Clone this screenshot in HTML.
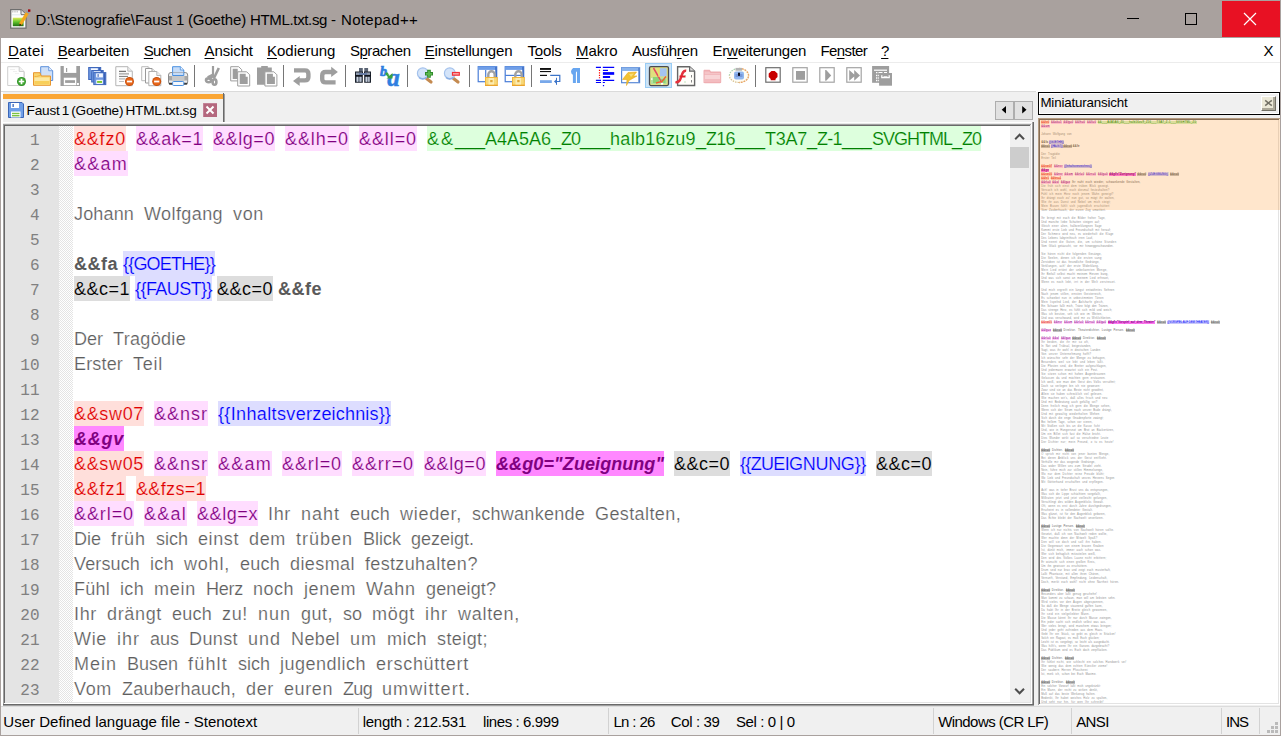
<!DOCTYPE html>
<html lang="de"><head><meta charset="utf-8"><title>Notepad++</title>
<style>
html,body{margin:0;padding:0}
body{width:1281px;height:736px;overflow:hidden;position:relative;background:#a9a19e;font-family:'Liberation Sans',sans-serif;color:#000}
div,span,svg,i,b{position:absolute;box-sizing:border-box}
.t{white-space:pre;line-height:1}
#menu .t,#status .t,#title .t{font-size:15px}
#ed .w{white-space:pre;font-size:18px;line-height:25px;height:25px;top:1px;-webkit-text-stroke:.2px #fff}
#ed .w.B,#ed .w.M,#ed .w .ns{-webkit-text-stroke-width:0}
#ed .w span{position:static}
#ed .w.K{-webkit-text-stroke-width:.1px}
#ed .w.R{-webkit-text-stroke-color:#ffdfdb} #ed .w.P{-webkit-text-stroke-color:#ffddff} #ed .w.G{-webkit-text-stroke-color:#ddffdd} #ed .w.U{-webkit-text-stroke-color:#ddddff} #ed .w.K{-webkit-text-stroke-color:#dddddd} #ed .w.M{-webkit-text-stroke-color:#ff88ff}
#ed .l{left:0;width:1005px;height:25px}
.D{color:#5e5e5e}
.R{color:#e00000} .P{color:#800080} .G{color:#008000} .U{color:#0000ff} .K{color:#000}
.B{color:#5a5a5a;font-weight:bold} .M{color:#800080;font-weight:bold;font-style:italic}
.bR{background:#ffdfdb} .bP{background:#ffddff} .bG{background:#ddffdd} .bU{background:#ddddff} .bK{background:#dddddd} .bM{background:#ff88ff}
.bg{top:0;height:25px}
#ln span{right:0;width:40px;text-align:right;font:16px/25px 'Liberation Mono',monospace;color:#808080;height:25px}
#mm .l{left:0;height:4px;white-space:pre;font-size:2.7px;line-height:6px;color:#8e8e8e}
#mm .l span{position:static}
#mm i{font-style:normal;top:0;height:4px}
#mm i.g{top:.5px;height:3px}
#mm .bR{background:#ffcfc8} #mm .bP{background:#ffcdf8} #mm .bG{background:#d2f5c4} #mm .bU{background:#c8c8fa} #mm .bK{background:#c2c2c2} #mm .bM{background:#ff78f0}
#mm i.M{font-style:italic}
#mm .K{color:#4a4a4a}
u{text-decoration:underline;text-decoration-thickness:1px;text-underline-offset:1.500px}
</style></head>
<body>
<div id="title" style="left:0;top:0;width:1281px;height:38px;background:#a9a19e">
<svg style="left:10px;top:9px;overflow:visible" width="22" height="20" viewBox="0 0 22 20"><defs><linearGradient id="gg" x1="0" y1="0" x2="0" y2="1"><stop offset="0" stop-color="#dcea58"/><stop offset=".5" stop-color="#62c42c"/><stop offset="1" stop-color="#1f6e12"/></linearGradient></defs><path d="M.700.700h10.300l5 5v13.400h-15.300z" fill="#fdfdfd" stroke="#6e6e6e" stroke-width="1.300"/><path d="M11 .700v5h5" fill="#e4e4e4" stroke="#6e6e6e" stroke-width="1"/><path d="M2.800 1.500v2M5 1.500v2M7.200 1.500v2" stroke="#c4c4c4" stroke-width="1.300"/><path d="M2 5.800h9" stroke="#dfe9ee" stroke-width="1"/><rect x="2.800" y="8.700" width="10.800" height="8.500" fill="url(#gg)"/><path d="M10.400 15.400l7.400-12.200" stroke="#f2a81c" stroke-width="3.200"/><path d="M9.300 17.200l.4-2.600l2.200 1.300z" fill="#4a2c10"/><path d="M17.300 4l.9-1.500" stroke="#8a98b0" stroke-width="3"/><rect x="18" y=".400" width="2.400" height="2.400" fill="#a80008"/></svg>
<span class="t" style="left:35.6px;top:12px;letter-spacing:-0.05px">D:\Stenografie\Faust</span>
<span class="t" style="left:176.0px;top:12px;letter-spacing:-0.18px">1</span>
<span class="t" style="left:188.0px;top:12px;letter-spacing:-0.13px">(Goethe)</span>
<span class="t" style="left:250.0px;top:12px;letter-spacing:-0.34px">HTML.txt.sg</span>
<span class="t" style="left:331.0px;top:12px;letter-spacing:1.16px">-</span>
<span class="t" style="left:341.0px;top:12px;letter-spacing:0.31px">Notepad++</span>
<div style="left:1127px;top:18px;width:12px;height:1px;background:#000"></div>
<div style="left:1185px;top:13px;width:12px;height:12px;border:1px solid #000"></div>
<div style="left:1222px;top:1px;width:58px;height:36px;background:#e81123"></div>
<svg style="left:1243px;top:12px" width="14" height="14" viewBox="0 0 14 14"><path d="M1 1l12 12M13 1l-12 12" stroke="#fff" stroke-width="1.200"/></svg>
</div>
<div id="menu" style="left:1px;top:38px;width:1279px;height:24px;background:#fff">
<span class="t" style="left:7.1px;top:5px;letter-spacing:0.15px"><u>D</u>atei</span>
<span class="t" style="left:56.7px;top:5px;letter-spacing:-0.09px"><u>B</u>earbeiten</span>
<span class="t" style="left:142.8px;top:5px;letter-spacing:-0.71px"><u>S</u>uchen</span>
<span class="t" style="left:203.5px;top:5px;letter-spacing:-0.11px"><u>A</u>nsicht</span>
<span class="t" style="left:266.0px;top:5px;letter-spacing:0.01px"><u>K</u>odierung</span>
<span class="t" style="left:348.9px;top:5px;letter-spacing:-0.45px">S<u>p</u>rachen</span>
<span class="t" style="left:423.7px;top:5px;letter-spacing:-0.19px"><u>E</u>instellungen</span>
<span class="t" style="left:526.4px;top:5px;letter-spacing:-0.15px">T<u>o</u>ols</span>
<span class="t" style="left:575.1px;top:5px;letter-spacing:-0.06px"><u>M</u>akro</span>
<span class="t" style="left:630.9px;top:5px;letter-spacing:-0.29px">Ausfüh<u>r</u>en</span>
<span class="t" style="left:711.5px;top:5px;letter-spacing:-0.24px">Er<u>w</u>eiterungen</span>
<span class="t" style="left:819.4px;top:5px;letter-spacing:-0.59px">Fe<u>n</u>ster</span>
<span class="t" style="left:880.1px;top:5px;letter-spacing:-1.04px"><u>?</u></span>
<span class="t" style="left:1262.5px;top:5px;letter-spacing:-0.42px">X</span>
</div>
<div style="left:1px;top:62px;width:1279px;height:1px;background:#ececec"></div>
<div id="tb" style="left:1px;top:63px;width:1279px;height:28px;background:#fff">
<svg style="left:5px;top:3px;overflow:visible" width="24" height="20" viewBox="0 0 24 20"><path d="M1.700.700h11.500l4.800 4.800v14h-16.300z" fill="#fefefe" stroke="#cfcfcf" stroke-width="1"/><path d="M13.200.700v4.800h4.800" fill="#f1f1f1" stroke="#cfcfcf" stroke-width="1"/><path d="M18.500 6v13.500" stroke="#d8d8d8" stroke-width="1"/><path d="M4 3.500h5M7 5.500h4M9 7.500h4" stroke="#efefef" stroke-width="1.200"/><circle cx="15.500" cy="15.500" r="4.500" fill="#2f9426"/><circle cx="15.500" cy="15.500" r="3.400" fill="#47ab38"/><path d="M12.800 15.500h5.400M15.500 12.800v5.400" stroke="#fff" stroke-width="1.700"/></svg>
<svg style="left:32px;top:3px;overflow:visible" width="24" height="20" viewBox="0 0 24 20"><path d="M7.700.700h8l4 4v9.800h-12z" fill="#cfe0f8" stroke="#5b8fdb" stroke-width="1"/><path d="M15.700.700v4h4" fill="#e8f0fc" stroke="#5b8fdb" stroke-width=".8"/><path d="M.500 6.700h6.500l1.200 3.300h9.300v9.300h-17z" fill="#f9d46c" stroke="#e8962e" stroke-width="1"/><path d="M1.500 11.500h15v7h-15z" fill="#fce9a4"/><path d="M1.500 15h15v3.500h-15z" fill="#f8cf5a"/><path d="M1.500 10.500c3 .5 4-1 6-1" stroke="#f0b040" stroke-width="1" fill="none"/></svg>
<svg style="left:59px;top:3px;overflow:visible" width="24" height="20" viewBox="0 0 24 20"><path d="M.500 0h19.500v20h-19.500z" fill="#9e9e9e"/><rect x="3.800" y="0" width="12.500" height="6.900" fill="#fff"/><rect x="6" y="2" width="1.200" height="4" fill="#9e9e9e"/><rect x="3.800" y="11.700" width="12.500" height="7.500" fill="#fff"/><rect x="5.100" y="14.200" width="9.900" height="2.700" fill="#9e9e9e"/><rect x="17" y="17" width="1.900" height="2" fill="#fff"/></svg>
<svg style="left:86px;top:3px;overflow:visible" width="24" height="20" viewBox="0 0 24 20"><rect x="1.7" y="1.5" width="12" height="12" fill="#6f98e0" stroke="#3f68bc" stroke-width="1"/><rect x="11.5" y="2.0" width="1.700" height="11" fill="#3a60b4"/><rect x="4.0" y="2.3" width="6.8" height="4.0" fill="#f4f8ff"/><rect x="4.7" y="4.5" width="11.5" height="11.5" fill="#6f98e0" stroke="#3f68bc" stroke-width="1"/><rect x="14.0" y="5.0" width="1.700" height="10.5" fill="#3a60b4"/><rect x="7.0" y="5.3" width="6.3" height="3.8" fill="#f4f8ff"/><rect x="6.8" y="6.6" width="12" height="12" fill="#6f98e0" stroke="#3f68bc" stroke-width="1"/><rect x="16.6" y="7.1" width="1.700" height="11" fill="#3a60b4"/><rect x="9.1" y="7.3999999999999995" width="6.8" height="4.0" fill="#f4f8ff"/><rect x="10.6" y="8.1" width="1" height="2.800" fill="#2f58b0"/><rect x="9.3" y="13.8" width="6.5" height="4.1" fill="#fff"/><rect x="10.1" y="14.9" width="4.9" height="2" fill="#7cc832"/></svg>
<svg style="left:113px;top:3px;overflow:visible" width="24" height="20" viewBox="0 0 24 20"><path d="M1.8 0.7h12.0l4.5 4.5v14.5h-16.5z" fill="#fefefe" stroke="#b4b4b4" stroke-width="1"/><path d="M13.8 0.7v4.5h4.5" fill="#eee" stroke="#b4b4b4" stroke-width=".9"/><path d="M5 5.300h7" stroke="#555" stroke-width="1"/><path d="M5 7.800h10" stroke="#b8b8b8" stroke-width="1.800"/><path d="M5 10.400h9" stroke="#777" stroke-width="1"/><path d="M5 12.800h6" stroke="#c8c8c8" stroke-width="1.800"/><path d="M5 15.500h5" stroke="#c0c0c0" stroke-width="1"/><circle cx="15.5" cy="15.5" r="4.5" fill="#c8500c"/><circle cx="15.5" cy="15.5" r="3.5" fill="#e8661a"/><rect x="12.9" y="14.6" width="5.200" height="1.800" fill="#fff"/></svg>
<svg style="left:140px;top:3px;overflow:visible" width="24" height="20" viewBox="0 0 24 20"><path d="M0.7 0.7h6.5l3 3v11h-9.5z" fill="#fefefe" stroke="#bcbcbc" stroke-width="1"/><path d="M7.199999999999999 0.7v3h3" fill="#eee" stroke="#bcbcbc" stroke-width=".9"/><path d="M4.5 2.5h6.5l3 3v11.5h-9.5z" fill="#fefefe" stroke="#9a9a9a" stroke-width="1"/><path d="M11.0 2.5v3h3" fill="#eee" stroke="#9a9a9a" stroke-width=".9"/><path d="M7.8 5.5h8l4 4v10.2h-12z" fill="#fefefe" stroke="#b0b0b0" stroke-width="1"/><path d="M15.8 5.5v4h4" fill="#eee" stroke="#b0b0b0" stroke-width=".9"/><circle cx="15.7" cy="15.5" r="4.5" fill="#c8500c"/><circle cx="15.7" cy="15.5" r="3.5" fill="#e8661a"/><rect x="13.1" y="14.6" width="5.200" height="1.800" fill="#fff"/></svg>
<svg style="left:167px;top:3px;overflow:visible" width="24" height="20" viewBox="0 0 24 20"><path d="M4.600.700h7.700l3.500 3.300v5.500h-11.200z" fill="#c6dcf8" stroke="#4a90e0" stroke-width="1"/><path d="M12.300.700v3.300h3.500" fill="#eef4fd" stroke="#4a90e0" stroke-width=".8"/><rect x=".500" y="6.500" width="19.200" height="12" rx="2.500" fill="#ececec" stroke="#8c8c8c" stroke-width="1"/><path d="M4.600 6.500v3h11.200v-3" fill="#c6dcf8" stroke="#4a90e0" stroke-width="1"/><rect x="1" y="10" width="18.200" height="4.500" fill="#a8a8a8"/><rect x="4" y="10" width="12.500" height="4.500" fill="#c8c8c8"/><rect x="1" y="16.800" width="18.200" height="1.700" fill="#3c3c3c"/><rect x="4.600" y="15.500" width="11.200" height="4" rx="1" fill="#f4f8fe" stroke="#4a90e0" stroke-width="1"/></svg>
<div style="left:193px;top:2px;width:1px;height:22px;background:#767676"></div>
<svg style="left:200px;top:3px;overflow:visible" width="24" height="20" viewBox="0 0 24 20"><path d="M12 0v11.500" stroke="#9e9e9e" stroke-width="2.200"/><path d="M17.800 2l-5 10.500" stroke="#9e9e9e" stroke-width="2.600"/><path d="M13 9l-6 3" stroke="#9e9e9e" stroke-width="4"/><ellipse cx="7.600" cy="14.300" rx="2.600" ry="1.900" fill="none" stroke="#9e9e9e" stroke-width="2.600"/><ellipse cx="13.500" cy="16" rx="1.900" ry="2.800" fill="none" stroke="#9e9e9e" stroke-width="2.600"/></svg>
<svg style="left:227px;top:3px;overflow:visible" width="24" height="20" viewBox="0 0 24 20"><path d="M2.7 0.7h8l3 3v11.2h-11z" fill="#fff" stroke="#9e9e9e" stroke-width="1"/><path d="M4.7 2.7h5v3h2v7.199999999999999h-7z" fill="#9e9e9e"/><path d="M9.7 5.8h9l3 3v11.2h-12z" fill="#fff" stroke="#9e9e9e" stroke-width="1"/><path d="M11.7 7.8h6v3h2v7.199999999999999h-8z" fill="#9e9e9e"/></svg>
<svg style="left:254px;top:3px;overflow:visible" width="24" height="20" viewBox="0 0 24 20"><path d="M2 1.400h4.200v-1.400h6.600v1.400h4v17.300h-14.800z" fill="#9e9e9e"/><path d="M9.9 5.8h9l3 3v11.2h-12z" fill="#fff" stroke="#9e9e9e" stroke-width="1"/><path d="M11.9 7.8h6v3h2v7.199999999999999h-8z" fill="#9e9e9e"/></svg>
<div style="left:282px;top:2px;width:1px;height:22px;background:#767676"></div>
<svg style="left:289px;top:3px;overflow:visible" width="24" height="20" viewBox="0 0 24 20"><path d="M4 4.400h10.800q3.600 0 3.600 3.500v3q0 3.500-3.600 3.500h-5.800" fill="none" stroke="#9e9e9e" stroke-width="4.400"/><path d="M3 14.900l6.700-5v10z" fill="#9e9e9e"/></svg>
<svg style="left:316px;top:3px;overflow:visible" width="24" height="20" viewBox="0 0 24 20"><path d="M15 6h-6.300q-3.500 0-3.500 3.500v3.400q0 3.500 3.500 3.500h9.900" fill="none" stroke="#9e9e9e" stroke-width="4.400"/><path d="M20.900 5.900l-6.700-5.100v10.200z" fill="#9e9e9e"/></svg>
<div style="left:344px;top:2px;width:1px;height:22px;background:#767676"></div>
<svg style="left:351px;top:3px;overflow:visible" width="24" height="20" viewBox="0 0 24 20"><path d="M7 2.100h3.800v4h-3.800zM12.300 2.100h3.800v4h-3.800z" fill="#5a6474"/><path d="M3 5.500h8v11.300h-8zM12 5.500h7v11.300h-7z" fill="#1c222c"/><path d="M4 6.500h6v2.500h-6zM13 6.500h5v2.500h-5z" fill="#8e9aae"/><rect x="7" y="7" width="8" height="2" fill="#6a7fa8"/><path d="M4 10.800h6v5h-6zM13 10.800h5v5h-5z" fill="#7a8494"/><path d="M5.500 10.800v5M8.300 10.800v5M14.500 10.800v5M16.800 10.800v5" stroke="#c8d0dc" stroke-width="1"/><path d="M3 9.600h16" stroke="#10141c" stroke-width="1.300"/><rect x="10.800" y="9" width="1.400" height="8" fill="#fff"/></svg>
<svg style="left:378px;top:3px;overflow:visible" width="24" height="20" viewBox="0 0 24 20"><text x="1" y="9.800" font-family="Liberation Serif,serif" font-weight="bold" font-style="italic" font-size="14" fill="#2f7fe0" stroke="#2f7fe0" stroke-width=".7">b</text><text x="8.300" y="19.600" font-family="Liberation Serif,serif" font-weight="bold" font-style="italic" font-size="25" fill="#2f7fe0" stroke="#2f7fe0" stroke-width=".5">a</text><path d="M7 6.800l3.500 4.200" stroke="#3aa040" stroke-width="2.600"/><path d="M7.500 12.500h6v-5.500z" fill="#3aa040"/><path d="M9.300 8.500l1.500 1.500" stroke="#a8e0a0" stroke-width="1"/></svg>
<div style="left:406px;top:2px;width:1px;height:22px;background:#767676"></div>
<svg style="left:413px;top:3px;overflow:visible" width="24" height="20" viewBox="0 0 24 20"><path d="M12.500 12.500l4.500 3.500" stroke="#c48a50" stroke-width="3.200" stroke-linecap="round"/><circle cx="8.800" cy="7.200" r="5.400" fill="#d4e4f9" stroke="#a4c2ec" stroke-width="1.200"/><path d="M5 11.500c2 2 5.500 2 7.500 0" stroke="#88aee4" stroke-width="1.400" fill="none"/><path d="M11 7.800h8M15 3.800v8" stroke="#2f8a2a" stroke-width="3.600"/><path d="M12 7.800h6M15 4.800v6" stroke="#5cb850" stroke-width="1.800"/></svg>
<svg style="left:440px;top:3px;overflow:visible" width="24" height="20" viewBox="0 0 24 20"><path d="M12.500 12.500l4.500 3.500" stroke="#c48a50" stroke-width="3.200" stroke-linecap="round"/><circle cx="8.800" cy="7.200" r="5.400" fill="#d4e4f9" stroke="#a4c2ec" stroke-width="1.200"/><path d="M5 11.500c2 2 5.500 2 7.500 0" stroke="#88aee4" stroke-width="1.400" fill="none"/><rect x="10.900" y="5.900" width="8" height="3.900" fill="#f03038"/><rect x="12" y="7" width="5.800" height="1.600" fill="#f8a0a0"/></svg>
<div style="left:468px;top:2px;width:1px;height:22px;background:#767676"></div>
<svg style="left:475px;top:3px;overflow:visible" width="24" height="20" viewBox="0 0 24 20"><rect x="2.2" y=".700" width="18.500" height="15" fill="#fff" stroke="#4a7ed8" stroke-width="1.200"/><rect x="2.2" y=".700" width="18.500" height="3.200" fill="#6f9ee8"/><path d="M20.0 1v14.500" stroke="#3a68c0" stroke-width="1.400"/><path d="M9.700 4v11.700" stroke="#4a7ed8" stroke-width="1.200"/><path d="M12.3 11.5v-3a3.200 3.200 0 0 1 6.400 0v3" fill="none" stroke="#a2a2a2" stroke-width="2.400"/><rect x="9" y="11" width="12.800" height="8.800" fill="#f1b73c"/><rect x="10" y="12" width="10.800" height="6.800" fill="#f8d878"/><rect x="12.5" y="12" width="5.500" height="6.800" fill="#fcecb0"/><rect x="14.2" y="14" width="2.400" height="2.200" fill="#e0a83a"/><path d="M9 19.3h12.800" stroke="#e89a20" stroke-width="1"/></svg>
<svg style="left:502px;top:3px;overflow:visible" width="24" height="20" viewBox="0 0 24 20"><rect x="2.2" y=".700" width="18.500" height="15" fill="#fff" stroke="#4a7ed8" stroke-width="1.200"/><rect x="2.2" y=".700" width="18.500" height="3.200" fill="#6f9ee8"/><path d="M20.0 1v14.500" stroke="#3a68c0" stroke-width="1.400"/><path d="M2.200 9.400h18" stroke="#4a7ed8" stroke-width="1.200"/><path d="M12.3 11.5v-3a3.200 3.200 0 0 1 6.400 0v3" fill="none" stroke="#a2a2a2" stroke-width="2.400"/><rect x="9" y="11" width="12.800" height="8.800" fill="#f1b73c"/><rect x="10" y="12" width="10.800" height="6.800" fill="#f8d878"/><rect x="12.5" y="12" width="5.500" height="6.800" fill="#fcecb0"/><rect x="14.2" y="14" width="2.400" height="2.200" fill="#e0a83a"/><path d="M9 19.3h12.800" stroke="#e89a20" stroke-width="1"/></svg>
<div style="left:530px;top:2px;width:1px;height:22px;background:#767676"></div>
<svg style="left:537px;top:3px;overflow:visible" width="24" height="20" viewBox="0 0 24 20"><rect x="2" y="2" width="11" height="1.900" fill="#111"/><rect x="2" y="5" width="11" height="1.100" fill="#111"/><rect x="2" y="8.800" width="7" height="1.200" fill="#111"/><path d="M12.200 9.400h9.600v6.100h-5" stroke="#3c74c8" stroke-width="1.200" fill="none"/><path d="M18.500 11.800v7" stroke="#3c74c8" stroke-width="1"/><path d="M19 12.800l-3 2.700l3 2.700z" fill="#3c74c8"/><rect x="2" y="14.200" width="11.800" height="2.800" fill="#78a8ea"/></svg>
<svg style="left:564px;top:3px;overflow:visible" width="24" height="20" viewBox="0 0 24 20"><path d="M9.400 2v15M13.500 2v15" stroke="#68a6f0" stroke-width="3"/><path d="M15 1.900h-5a4 4 0 0 0-4 3.800a3.500 3.500 0 0 0 2.500 3.300z" fill="#68a6f0"/></svg>
<svg style="left:591px;top:3px;overflow:visible" width="24" height="20" viewBox="0 0 24 20"><path d="M3.900 1.400h5.100M10.800 1.400h11.400M3.900 14.400h5.100M10.800 14.400h11.400M3.900 16.500h5.100M10.800 16.500h2.100" stroke="#0000ff" stroke-width="1.200"/><path d="M10.900 4.400h5.100" stroke="#0000ff" stroke-width="1.200"/><rect x="10.900" y="6.100" width="11.300" height="2.700" fill="#0000ff"/><rect x="10.900" y="10" width="7.200" height="2" fill="#0000ff"/><rect x="10.900" y="19" width="1.200" height="1.200" fill="#0000ff"/><path d="M7.500 3.700v8.500" stroke="#f00" stroke-width="1.200" stroke-dasharray="1.200 1.300"/></svg>
<svg style="left:618px;top:3px;overflow:visible" width="24" height="20" viewBox="0 0 24 20"><rect x="2.600" y="1.700" width="18" height="15" fill="#fff" stroke="#5a8ad8" stroke-width="1.200"/><rect x="2.600" y="1.700" width="18" height="3.300" fill="#8ab4ec"/><path d="M20 2v14" stroke="#4a78c8" stroke-width="1.300"/><path d="M9 6.500l8.500-.5l-3 4h3.500l-8 4.500l-2.500 5l.5-6h-4.500z" fill="#f2c232" stroke="#e8aa20" stroke-width=".6"/><path d="M10 8l5-.5l-3 3.500" fill="#f8dc78"/></svg>
<div style="left:644px;top:0;width:27px;height:25px;background:#cce4f7;border:1px solid #99ccf5"></div>
<svg style="left:645px;top:3px;overflow:visible" width="24" height="20" viewBox="0 0 24 20"><rect x="3.500" y=".600" width="19" height="19" rx="1.500" fill="#e0e07e" stroke="#4a4a50" stroke-width="1.300"/><rect x="13.500" y="2.200" width="7.200" height="8.200" fill="#a4c4f0"/><rect x="4.800" y="11.500" width="15.800" height="6.500" fill="#b4e0a0"/><rect x="7" y="11" width="6" height="6" fill="#8cd478"/><rect x="15" y="13" width="4.500" height="4" fill="#8cd478"/><path d="M7.500 2l5.500 9.500l3 6" stroke="#e84860" stroke-width="1.500" fill="none"/><path d="M20 10.500l-4 5l-6 1.500" stroke="#f06030" stroke-width="1.400" fill="none"/><path d="M13 2v9" stroke="#f0e060" stroke-width="1.200"/><rect x="15" y="16.800" width="2.200" height="1.800" fill="#fff"/><rect x="5" y="12.300" width="1.500" height="1.500" fill="#fff"/></svg>
<svg style="left:672px;top:3px;overflow:visible" width="24" height="20" viewBox="0 0 24 20"><path d="M4.600.700h12l5 4.500v14.300h-17z" fill="#fffefa" stroke="#666" stroke-width="1.400"/><path d="M16.600.700v4.500h5" fill="#ddd" stroke="#666" stroke-width="1.200"/><path d="M13.200 4.800c-3.500-.5-4 3-5.500 7.500c-1 3-2.500 4.300-5.300 3.800" stroke="#e4303c" stroke-width="2.400" fill="none"/><path d="M6.500 10.500h6" stroke="#e0202c" stroke-width="2"/><path d="M18.500 9v2.500M18.500 14v2.500" stroke="#888" stroke-width="1"/><path d="M11.500 9.500h1M11.500 16h1" stroke="#8c8" stroke-width="1"/></svg>
<svg style="left:699px;top:3px;overflow:visible" width="24" height="20" viewBox="0 0 24 20"><path d="M3.500 5c0-.8.400-1.200 1.200-1.200h5l1.300 1.600h9c.8 0 1.200.4 1.200 1.200v9.500c0 .8-.4 1.200-1.200 1.200h-15.300c-.8 0-1.200-.4-1.200-1.200z" fill="#efaeb2"/><path d="M4.600 9h15.500v7h-15.500z" fill="#f8d4d6"/><path d="M4.600 5.500h4.500l1.500 1.500h9.500v1.500h-15.500z" fill="#f5c4c7"/><path d="M4.600 13h15.500v3h-15.500z" fill="#f3bcc0"/></svg>
<svg style="left:726px;top:3px;overflow:visible" width="24" height="20" viewBox="0 0 24 20"><ellipse cx="12" cy="9.500" rx="9.600" ry="7" fill="#fffdf4"/><path d="M2.400 9.500a9.600 7 0 0 1 9.600-7" stroke="#a8d4b0" stroke-width="1.200" fill="none" stroke-dasharray="1.500 1"/><path d="M12 2.500a9.600 7 0 0 1 0 14" stroke="#e8a868" stroke-width="1.400" fill="none" stroke-dasharray="2 .8"/><path d="M12 16.500a9.600 7 0 0 1-9.600-7" stroke="#d8c090" stroke-width="1.200" fill="none" stroke-dasharray="1.500 1"/><rect x="8.500" y="1.900" width="6.500" height="2.800" fill="#b4b4b4"/><rect x="7" y="5.600" width="10" height="8" rx="2" fill="#92b8f0"/><rect x="8.500" y="8" width="7" height="3" fill="#7898d8"/><rect x="11" y="6.700" width="2" height="3.200" fill="#0c1020"/></svg>
<div style="left:754px;top:2px;width:1px;height:22px;background:#767676"></div>
<svg style="left:761px;top:3px;overflow:visible" width="24" height="20" viewBox="0 0 24 20"><rect x="3.800" y="1.700" width="14.400" height="14.500" fill="#fff" stroke="#6e6e6e" stroke-width="1.200"/><path d="M9.500 5h3.200l2.800 2.500v3.500l-2 2v1.300h-4.800v-1.300l-2-2v-3.500z" fill="#c80000"/></svg>
<svg style="left:788px;top:3px;overflow:visible" width="24" height="20" viewBox="0 0 24 20"><rect x="3.800" y="1.700" width="14.400" height="14.500" fill="#fff" stroke="#a4a4a4" stroke-width="1.200"/><rect x="7" y="5" width="9" height="8.800" fill="#9e9e9e"/></svg>
<svg style="left:815px;top:3px;overflow:visible" width="24" height="20" viewBox="0 0 24 20"><rect x="3.800" y="1.700" width="14.400" height="14.500" fill="#fff" stroke="#a4a4a4" stroke-width="1.200"/><path d="M9.200 4v10.800h1l5-5.400l-5-5.400z" fill="#9e9e9e"/></svg>
<svg style="left:842px;top:3px;overflow:visible" width="24" height="20" viewBox="0 0 24 20"><rect x="3.800" y="1.700" width="14.400" height="14.500" fill="#fff" stroke="#a4a4a4" stroke-width="1.200"/><path d="M6.200 4v10.800l5-4.400v4.400l5.800-5.400l-5.800-5.400v4.400z" fill="#9e9e9e"/></svg>
<svg style="left:869px;top:3px;overflow:visible" width="24" height="20" viewBox="0 0 24 20"><rect x="2.100" y="0" width="17" height="16.800" fill="#9e9e9e"/><path d="M4 4.200h13" stroke="#fff" stroke-width="1.200"/><path d="M6 6.700h1.400M8.500 6.700h4M14 6.700h3M6 9.500h1.400M8.200 9.500h1.400M6 12h1.400M8.200 12h1.400M6 14.500h1.400M8.200 14.500h1.400" stroke="#fff" stroke-width="1.300"/><rect x="9.100" y="7" width="12.900" height="12.700" fill="#9e9e9e"/><path d="M11.800 9.300v2.400h7.400v-2.400" stroke="#fff" stroke-width="1.300" fill="none"/><rect x="13.500" y="10.300" width="4" height="1.400" fill="#fff"/></svg>
</div>
<div id="left" style="left:1px;top:91px;width:1035px;height:615px;background:#f0f0f0">
<div style="left:0px;top:0px;width:1035px;height:1px;background:#dadada;"></div>
<div style="left:0px;top:1px;width:2px;height:614px;background:#fff;"></div>
<div style="left:2px;top:3px;width:221px;height:5px;background:#faa635;"></div>
<div style="left:222px;top:2px;width:1px;height:30px;background:#696969;"></div>
<div style="left:223px;top:3px;width:1px;height:29px;background:#a0a0a0;"></div>
<svg style="left:7px;top:11px" width="16" height="16" viewBox="0 0 16 16"><path d="M.5.5h13.500l1.500 1.500v13.500h-15z" fill="#6f9fe8" stroke="#3a66b8"/><rect x="3" y="1" width="8" height="5" fill="#fff"/><rect x="4.500" y="2" width="1.300" height="3" fill="#3a66b8"/><rect x="3" y="9.500" width="9.500" height="6" fill="#fff"/><rect x="4" y="10.800" width="7.500" height="1.400" fill="#7cc243"/><rect x="4" y="13" width="7.500" height="1.400" fill="#7cc243"/></svg>
<span class="t" style="left:25.6px;top:13px;font-size:13.600px;word-spacing:-1.500px;letter-spacing:-0.19px">Faust 1 (Goethe) HTML.txt.sg</span>
<svg style="left:202px;top:12px" width="14" height="14" viewBox="0 0 14 14"><rect width="14" height="14" fill="#b4687e"/><path d="M0 14v-14h14" fill="none" stroke="#c68ba0" stroke-width="1.500"/><path d="M3.500 3.500l7 7M10.500 3.500l-7 7" stroke="#fff" stroke-width="2"/></svg>
<div style="left:994px;top:10px;width:19px;height:19px;background:#e1e1e1;border:1px solid #adadad"></div>
<div style="left:1013px;top:10px;width:19px;height:19px;background:#e1e1e1;border:1px solid #adadad"></div>
<svg style="left:994px;top:10px" width="38" height="19" viewBox="0 0 38 19"><path d="M11 5v7.500l-4.300-3.750z" fill="#000"/><path d="M27.200 5v7.500l4.300-3.750z" fill="#000"/></svg>
<div style="left:2px;top:31px;width:1030px;height:1px;background:#fff;"></div>
<div style="left:2px;top:32px;width:1030px;height:1px;background:#e8e8e8;"></div>
<div style="left:2px;top:33px;width:1029px;height:1px;background:#a0a0a0;"></div>
<div style="left:3px;top:34px;width:1027px;height:1px;background:#696969;"></div>
<div style="left:2px;top:33px;width:1px;height:581px;background:#a0a0a0;"></div>
<div style="left:3px;top:34px;width:1px;height:579px;background:#696969;"></div>
<div style="left:1030px;top:33px;width:1px;height:580px;background:#fff;"></div>
<div style="left:1029px;top:34px;width:1px;height:578px;background:#e3e3e3;"></div>
<div style="left:1031px;top:31px;width:1px;height:584px;background:#a0a0a0;"></div>
<div style="left:1032px;top:31px;width:1px;height:584px;background:#696969;"></div>
<div style="left:3px;top:612px;width:1028px;height:1px;background:#fff;"></div>
<div style="left:4px;top:611px;width:1026px;height:1px;background:#e3e3e3;"></div>
<div style="left:2px;top:613px;width:1031px;height:1px;background:#696969;"></div>
<div style="left:2px;top:614px;width:1031px;height:1px;background:#a0a0a0;"></div>
<div id="ed" style="left:4px;top:35px;width:1005px;height:576px;background:#fff;overflow:hidden">
<div id="ln" style="left:0;top:0;width:54px;height:576px;background:#e4e4e4">
<span style="top:0px;right:19.5px;margin-top:3px">1</span>
<span style="top:25px;right:19.5px;margin-top:3px">2</span>
<span style="top:50px;right:19.5px;margin-top:3px">3</span>
<span style="top:75px;right:19.5px;margin-top:3px">4</span>
<span style="top:100px;right:19.5px;margin-top:3px">5</span>
<span style="top:125px;right:19.5px;margin-top:3px">6</span>
<span style="top:150px;right:19.5px;margin-top:3px">7</span>
<span style="top:175px;right:19.5px;margin-top:3px">8</span>
<span style="top:200px;right:19.5px;margin-top:3px">9</span>
<span style="top:225px;right:19.5px;margin-top:3px">10</span>
<span style="top:250px;right:19.5px;margin-top:3px">11</span>
<span style="top:275px;right:19.5px;margin-top:3px">12</span>
<span style="top:300px;right:19.5px;margin-top:3px">13</span>
<span style="top:325px;right:19.5px;margin-top:3px">14</span>
<span style="top:350px;right:19.5px;margin-top:3px">15</span>
<span style="top:375px;right:19.5px;margin-top:3px">16</span>
<span style="top:400px;right:19.5px;margin-top:3px">17</span>
<span style="top:425px;right:19.5px;margin-top:3px">18</span>
<span style="top:450px;right:19.5px;margin-top:3px">19</span>
<span style="top:475px;right:19.5px;margin-top:3px">20</span>
<span style="top:500px;right:19.5px;margin-top:3px">21</span>
<span style="top:525px;right:19.5px;margin-top:3px">22</span>
<span style="top:550px;right:19.5px;margin-top:3px">23</span>
</div>
<div style="left:54px;top:0;width:14px;height:576px;background:#f2f2f2;background-image:conic-gradient(#e4e4e4 25%,#fff 0 50%,#e4e4e4 0 75%,#fff 0);background-size:2px 2px"></div>
<div class="l" style="top:0px">
<i class="bg bR" style="left:69px;width:52px"></i>
<i class="bg bP" style="left:131px;width:67px"></i>
<i class="bg bP" style="left:208px;width:62px"></i>
<i class="bg bP" style="left:280px;width:64px"></i>
<i class="bg bP" style="left:354px;width:58px"></i>
<i class="bg bG" style="left:422px;width:554px"></i>
<span class="w R" style="left:69px"><span style="letter-spacing:0.79px">&amp;&amp;fz0</span></span>
<span class="w P" style="left:131px"><span style="letter-spacing:0.58px">&amp;&amp;ak=1</span></span>
<span class="w P" style="left:208px"><span style="letter-spacing:0.58px">&amp;&amp;lg=0</span></span>
<span class="w P" style="left:280px"><span style="letter-spacing:0.91px">&amp;&amp;lh=0</span></span>
<span class="w P" style="left:354px"><span style="letter-spacing:0.91px">&amp;&amp;ll=0</span></span>
<span class="w G" style="left:422px"><span style="letter-spacing:1.99px">&amp;&amp;</span><span class="ns" style="letter-spacing:-0.02px">___</span><span style="letter-spacing:-0.01px">A4A5A6</span><span class="ns" style="letter-spacing:-0.02px">_</span><span style="letter-spacing:-1.01px">Z0</span><span class="ns" style="letter-spacing:-0.02px">___</span><span style="letter-spacing:0.32px">halb16zu9</span><span class="ns" style="letter-spacing:-0.02px">_</span><span style="letter-spacing:-0.68px">Z16</span><span class="ns" style="letter-spacing:-0.02px">___</span><span style="letter-spacing:-0.26px">T3A7</span><span class="ns" style="letter-spacing:-0.02px">_</span><span style="letter-spacing:-0.67px">Z-1</span><span class="ns" style="letter-spacing:-0.02px">___</span><span style="letter-spacing:-1.00px">SVGHTML</span><span class="ns" style="letter-spacing:-0.02px">_</span><span style="letter-spacing:-1.01px">Z0</span></span>
</div>
<div class="l" style="top:25px">
<i class="bg bP" style="left:69px;width:54px"></i>
<span class="w P" style="left:69px"><span style="letter-spacing:1.24px">&amp;&amp;am</span></span>
</div>
<div class="l" style="top:75px">
<span class="w D" style="left:69px"><span style="letter-spacing:0.16px">Johann</span></span>
<span class="w D" style="left:139px"><span style="letter-spacing:0.41px">Wolfgang</span></span>
<span class="w D" style="left:228px"><span style="letter-spacing:0.66px">von</span></span>
</div>
<div class="l" style="top:125px">
<i class="bg bU" style="left:118px;width:92px"></i>
<span class="w B" style="left:69px"><span style="letter-spacing:0.50px">&amp;&amp;fa</span></span>
<span class="w U" style="left:118px"><span style="letter-spacing:-0.81px">{{GOETHE}}</span></span>
</div>
<div class="l" style="top:150px">
<i class="bg bK" style="left:69px;width:56px"></i>
<i class="bg bU" style="left:130px;width:77px"></i>
<i class="bg bK" style="left:212px;width:56px"></i>
<span class="w K" style="left:69px"><span style="letter-spacing:0.49px">&amp;&amp;c=1</span></span>
<span class="w U" style="left:130px"><span style="letter-spacing:-0.56px">{{FAUST}}</span></span>
<span class="w K" style="left:212px"><span style="letter-spacing:0.49px">&amp;&amp;c=0</span></span>
<span class="w B" style="left:273px"><span style="letter-spacing:0.50px">&amp;&amp;fe</span></span>
</div>
<div class="l" style="top:200px">
<span class="w D" style="left:69px"><span style="letter-spacing:-0.01px">Der</span></span>
<span class="w D" style="left:108px"><span style="letter-spacing:0.33px">Tragödie</span></span>
</div>
<div class="l" style="top:225px">
<span class="w D" style="left:69px"><span style="letter-spacing:0.16px">Erster</span></span>
<span class="w D" style="left:128px"><span style="letter-spacing:0.75px">Teil</span></span>
</div>
<div class="l" style="top:275px">
<i class="bg bR" style="left:69px;width:70px"></i>
<i class="bg bP" style="left:149px;width:54px"></i>
<i class="bg bU" style="left:213px;width:173px"></i>
<span class="w R" style="left:69px"><span style="letter-spacing:0.66px">&amp;&amp;sw07</span></span>
<span class="w P" style="left:149px"><span style="letter-spacing:0.99px">&amp;&amp;nsr</span></span>
<span class="w U" style="left:213px"><span style="letter-spacing:0.36px">{{Inhaltsve</span><span style="letter-spacing:0.18px">rzeichnis}}</span></span>
</div>
<div class="l" style="top:300px">
<i class="bg bM" style="left:69px;width:50px"></i>
<span class="w M" style="left:69px"><span style="letter-spacing:0.75px">&amp;&amp;gv</span></span>
</div>
<div class="l" style="top:325px">
<i class="bg bR" style="left:69px;width:70px"></i>
<i class="bg bP" style="left:149px;width:54px"></i>
<i class="bg bP" style="left:213px;width:54px"></i>
<i class="bg bP" style="left:277px;width:60px"></i>
<i class="bg bP" style="left:347px;width:62px"></i>
<i class="bg bP" style="left:419px;width:62px"></i>
<i class="bg bM" style="left:491px;width:168px"></i>
<i class="bg bK" style="left:669px;width:56px"></i>
<i class="bg bU" style="left:735px;width:126px"></i>
<i class="bg bK" style="left:871px;width:56px"></i>
<span class="w R" style="left:69px"><span style="letter-spacing:0.66px">&amp;&amp;sw05</span></span>
<span class="w P" style="left:149px"><span style="letter-spacing:0.99px">&amp;&amp;nsr</span></span>
<span class="w P" style="left:213px"><span style="letter-spacing:1.24px">&amp;&amp;am</span></span>
<span class="w P" style="left:277px"><span style="letter-spacing:0.91px">&amp;&amp;rl=0</span></span>
<span class="w P" style="left:347px"><span style="letter-spacing:0.91px">&amp;&amp;rr=0</span></span>
<span class="w P" style="left:419px"><span style="letter-spacing:0.58px">&amp;&amp;lg=0</span></span>
<span class="w M" style="left:491px"><span style="letter-spacing:0.12px">&amp;&amp;g0=&quot;Zu</span><span style="letter-spacing:0.06px">eignung&quot;</span></span>
<span class="w K" style="left:669px"><span style="letter-spacing:0.49px">&amp;&amp;c=0</span></span>
<span class="w U" style="left:735px"><span style="letter-spacing:-0.67px">{{ZUEI</span><span style="letter-spacing:-0.29px">GNUNG}}</span></span>
<span class="w K" style="left:871px"><span style="letter-spacing:0.49px">&amp;&amp;c=0</span></span>
</div>
<div class="l" style="top:350px">
<i class="bg bR" style="left:69px;width:52px"></i>
<i class="bg bR" style="left:131px;width:70px"></i>
<span class="w R" style="left:69px"><span style="letter-spacing:0.79px">&amp;&amp;fz1</span></span>
<span class="w R" style="left:131px"><span style="letter-spacing:0.35px">&amp;&amp;fzs=1</span></span>
</div>
<div class="l" style="top:375px">
<i class="bg bP" style="left:69px;width:60px"></i>
<i class="bg bP" style="left:139px;width:43px"></i>
<i class="bg bP" style="left:192px;width:61px"></i>
<span class="w P" style="left:69px"><span style="letter-spacing:0.91px">&amp;&amp;rl=0</span></span>
<span class="w P" style="left:139px"><span style="letter-spacing:1.24px">&amp;&amp;al</span></span>
<span class="w P" style="left:192px"><span style="letter-spacing:0.58px">&amp;&amp;lg=x</span></span>
<span class="w D" style="left:263px"><span style="letter-spacing:0.66px">Ihr</span></span>
<span class="w D" style="left:296px"><span style="letter-spacing:0.99px">naht</span></span>
<span class="w D" style="left:345px"><span style="letter-spacing:0.24px">euch</span></span>
<span class="w D" style="left:395px"><span style="letter-spacing:0.71px">wieder,</span></span>
<span class="w D" style="left:467px"><span style="letter-spacing:0.27px">schwankende</span></span>
<span class="w D" style="left:590px"><span style="letter-spacing:0.40px">Gestalten,</span></span>
</div>
<div class="l" style="top:400px">
<span class="w D" style="left:69px"><span style="letter-spacing:-0.01px">Die</span></span>
<span class="w D" style="left:106px"><span style="letter-spacing:0.99px">früh</span></span>
<span class="w D" style="left:151px"><span style="letter-spacing:-0.00px">sich</span></span>
<span class="w D" style="left:193px"><span style="letter-spacing:0.59px">einst</span></span>
<span class="w D" style="left:244px"><span style="letter-spacing:0.66px">dem</span></span>
<span class="w D" style="left:291px"><span style="letter-spacing:0.99px">trüben</span></span>
<span class="w D" style="left:358px"><span style="letter-spacing:-0.00px">Blick</span></span>
<span class="w D" style="left:406px"><span style="letter-spacing:-0.01px">gezeigt.</span></span>
</div>
<div class="l" style="top:425px">
<span class="w D" style="left:69px"><span style="letter-spacing:0.14px">Versuch</span></span>
<span class="w D" style="left:145px"><span style="letter-spacing:0.33px">ich</span></span>
<span class="w D" style="left:179px"><span style="letter-spacing:0.79px">wohl,</span></span>
<span class="w D" style="left:235px"><span style="letter-spacing:0.24px">euch</span></span>
<span class="w D" style="left:285px"><span style="letter-spacing:0.42px">diesmal</span></span>
<span class="w D" style="left:360px"><span style="letter-spacing:0.33px">festzu</span><span style="letter-spacing:0.56px">halten?</span></span>
</div>
<div class="l" style="top:450px">
<span class="w D" style="left:69px"><span style="letter-spacing:0.25px">Fühl</span></span>
<span class="w D" style="left:115px"><span style="letter-spacing:0.33px">ich</span></span>
<span class="w D" style="left:149px"><span style="letter-spacing:0.75px">mein</span></span>
<span class="w D" style="left:201px"><span style="letter-spacing:-0.25px">Herz</span></span>
<span class="w D" style="left:248px"><span style="letter-spacing:0.49px">noch</span></span>
<span class="w D" style="left:299px"><span style="letter-spacing:0.59px">jenem</span></span>
<span class="w D" style="left:361px"><span style="letter-spacing:0.91px">Wahn</span></span>
<span class="w D" style="left:421px"><span style="letter-spacing:0.12px">geneigt?</span></span>
</div>
<div class="l" style="top:475px">
<span class="w D" style="left:69px"><span style="letter-spacing:0.66px">Ihr</span></span>
<span class="w D" style="left:102px"><span style="letter-spacing:0.66px">drängt</span></span>
<span class="w D" style="left:167px"><span style="letter-spacing:0.24px">euch</span></span>
<span class="w D" style="left:217px"><span style="letter-spacing:0.66px">zu!</span></span>
<span class="w D" style="left:253px"><span style="letter-spacing:0.98px">nun</span></span>
<span class="w D" style="left:296px"><span style="letter-spacing:0.49px">gut,</span></span>
<span class="w D" style="left:338px"><span style="letter-spacing:-0.01px">so</span></span>
<span class="w D" style="left:367px"><span style="letter-spacing:0.74px">mögt</span></span>
<span class="w D" style="left:420px"><span style="letter-spacing:0.99px">ihr</span></span>
<span class="w D" style="left:453px"><span style="letter-spacing:0.71px">walten,</span></span>
</div>
<div class="l" style="top:500px">
<span class="w D" style="left:69px"><span style="letter-spacing:0.67px">Wie</span></span>
<span class="w D" style="left:112px"><span style="letter-spacing:0.99px">ihr</span></span>
<span class="w D" style="left:145px"><span style="letter-spacing:-0.01px">aus</span></span>
<span class="w D" style="left:184px"><span style="letter-spacing:0.39px">Dunst</span></span>
<span class="w D" style="left:243px"><span style="letter-spacing:0.98px">und</span></span>
<span class="w D" style="left:286px"><span style="letter-spacing:0.39px">Nebel</span></span>
<span class="w D" style="left:345px"><span style="letter-spacing:0.99px">um</span></span>
<span class="w D" style="left:382px"><span style="letter-spacing:0.50px">mich</span></span>
<span class="w D" style="left:432px"><span style="letter-spacing:0.42px">steigt;</span></span>
</div>
<div class="l" style="top:525px">
<span class="w D" style="left:69px"><span style="letter-spacing:1.00px">Mein</span></span>
<span class="w D" style="left:122px"><span style="letter-spacing:-0.01px">Busen</span></span>
<span class="w D" style="left:183px"><span style="letter-spacing:1.19px">fühlt</span></span>
<span class="w D" style="left:233px"><span style="letter-spacing:-0.00px">sich</span></span>
<span class="w D" style="left:275px"><span style="letter-spacing:0.49px">jugendlich</span></span>
<span class="w D" style="left:371px"><span style="letter-spacing:0.72px">erschüttert</span></span>
</div>
<div class="l" style="top:550px">
<span class="w D" style="left:69px"><span style="letter-spacing:0.66px">Vom</span></span>
<span class="w D" style="left:117px"><span style="letter-spacing:0.24px">Zauberhauch,</span></span>
<span class="w D" style="left:241px"><span style="letter-spacing:0.66px">der</span></span>
<span class="w D" style="left:279px"><span style="letter-spacing:0.59px">euren</span></span>
<span class="w D" style="left:338px"><span style="letter-spacing:-0.68px">Zug</span></span>
<span class="w D" style="left:377px"><span style="letter-spacing:1.10px">umwittert.</span></span>
</div>
</div>
<div id="sb" style="left:1009px;top:35px;width:20px;height:576px;background:#f0f0f0">
<div style="left:0;top:21px;width:19px;height:21px;background:#cdcdcd"></div>
<svg style="left:0;top:0" width="20" height="576" viewBox="0 0 20 576"><path d="M5.200 13.200l4.400-4.500l4.400 4.500" fill="none" stroke="#4d4d4d" stroke-width="2"/><path d="M5.200 562.700l4.400 4.600l4.400-4.600" fill="none" stroke="#4d4d4d" stroke-width="2"/></svg>
</div>
</div>
<div id="right" style="left:1036px;top:91px;width:244px;height:615px;background:#f0f0f0">
<div style="left:0px;top:0px;width:244px;height:1px;background:#fff;"></div>
<div style="left:2px;top:1px;width:242px;height:23px;border:1px solid #000;background:#f0f0f0;box-shadow:inset 0 0 0 1px #fff"></div>
<span class="t" style="left:4.4px;top:5px;font-size:13.330px;letter-spacing:-0.16px">Miniaturansicht</span>
<div style="left:225px;top:5px;width:15px;height:15px;background:#ece9d8;border:1px solid;border-color:#fff #716f64 #716f64 #fff;box-shadow:inset -2px -2px 0 #aca899"></div>
<svg style="left:228px;top:8px" width="9" height="8" viewBox="0 0 9 8"><path d="M1.200 1.300l6.600 5.400M7.800 1.300l-6.600 5.400" stroke="#716f64" stroke-width="1.500"/></svg>
<div style="left:2px;top:27px;width:242px;height:1px;background:#a0a0a0;"></div>
<div style="left:3px;top:28px;width:240px;height:1px;background:#696969;"></div>
<div style="left:2px;top:27px;width:1px;height:587px;background:#a0a0a0;"></div>
<div style="left:3px;top:28px;width:1px;height:585px;background:#696969;"></div>
<div style="left:243px;top:28px;width:1px;height:586px;background:#fff;"></div>
<div style="left:242px;top:29px;width:1px;height:584px;background:#e3e3e3;"></div>
<div style="left:3px;top:613px;width:241px;height:1px;background:#fff;"></div>
<div style="left:4px;top:612px;width:239px;height:1px;background:#e3e3e3;"></div>
<div id="mm" style="left:4px;top:29px;width:238px;height:583px;background:#fff;overflow:hidden">
<div class="l" style="top:0px;left:1.200px;width:238px">
<i class="g bR" style="left:0.0px;width:8.3px"></i>
<i class="g bP" style="left:9.9px;width:10.7px"></i>
<i class="g bP" style="left:22.3px;width:9.9px"></i>
<i class="g bP" style="left:33.8px;width:10.3px"></i>
<i class="g bP" style="left:45.7px;width:9.3px"></i>
<i class="g bG" style="left:56.6px;width:98.9px"></i>
<i class="R" style="left:0.0px;letter-spacing:0.227px">&amp;&amp;fz0</i>
<i class="P" style="left:9.9px;letter-spacing:0.202px">&amp;&amp;ak=1</i>
<i class="P" style="left:22.3px;letter-spacing:0.194px">&amp;&amp;lg=0</i>
<i class="P" style="left:33.8px;letter-spacing:0.247px">&amp;&amp;lh=0</i>
<i class="P" style="left:45.7px;letter-spacing:0.237px">&amp;&amp;ll=0</i>
<i class="G" style="left:56.6px;letter-spacing:0.266px">&amp;&amp;___A4A5A6_Z0___halb16zu9_Z16___T3A7_Z-1___SVGHTML_Z0</i>
</div>
<div class="l" style="top:4px;left:1.200px;width:238px">
<i class="g bP" style="left:0.0px;width:8.6px"></i>
<i class="P" style="left:0.0px;letter-spacing:0.321px">&amp;&amp;am</i>
</div>
<div class="l" style="top:12px;left:1.200px;letter-spacing:0.144px">Johann  Wolfgang  von</div>
<div class="l" style="top:20px;left:1.200px;width:238px">
<i class="g bU" style="left:7.8px;width:14.7px"></i>
<i class="B" style="left:0.0px;letter-spacing:0.184px">&amp;&amp;fa</i>
<i class="U" style="left:7.8px;letter-spacing:-0.029px">{{GOETHE}}</i>
</div>
<div class="l" style="top:24px;left:1.200px;width:238px">
<i class="g bK" style="left:0.0px;width:8.7px"></i>
<i class="g bU" style="left:9.5px;width:11.9px"></i>
<i class="g bK" style="left:22.2px;width:8.7px"></i>
<i class="K" style="left:0.0px;letter-spacing:0.130px">&amp;&amp;c=1</i>
<i class="U" style="left:9.5px;letter-spacing:-0.042px">{{FAUST}}</i>
<i class="K" style="left:22.2px;letter-spacing:0.130px">&amp;&amp;c=0</i>
<i class="B" style="left:31.6px;letter-spacing:0.129px">&amp;&amp;fe</i>
</div>
<div class="l" style="top:32px;left:1.200px;letter-spacing:0.189px">Der  Tragödie</div>
<div class="l" style="top:36px;left:1.200px;letter-spacing:0.187px">Erster  Teil</div>
<div class="l" style="top:44px;left:1.200px;width:238px">
<i class="g bR" style="left:0.0px;width:11.2px"></i>
<i class="g bP" style="left:12.8px;width:8.6px"></i>
<i class="g bU" style="left:23.0px;width:27.7px"></i>
<i class="R" style="left:0.0px;letter-spacing:0.214px">&amp;&amp;sw07</i>
<i class="P" style="left:12.8px;letter-spacing:0.256px">&amp;&amp;nsr</i>
<i class="U" style="left:23.0px;letter-spacing:0.118px">{{Inhaltsverzeichnis}}</i>
</div>
<div class="l" style="top:48px;left:1.200px;width:238px">
<i class="g bM" style="left:0.0px;width:7.8px"></i>
<i class="M" style="left:0.0px;letter-spacing:0.199px">&amp;&amp;gv</i>
</div>
<div class="l" style="top:52px;left:1.200px;width:238px">
<i class="g bR" style="left:0.0px;width:11.3px"></i>
<i class="g bP" style="left:12.9px;width:8.7px"></i>
<i class="g bP" style="left:23.2px;width:8.7px"></i>
<i class="g bP" style="left:33.6px;width:9.7px"></i>
<i class="g bP" style="left:44.9px;width:10.0px"></i>
<i class="g bP" style="left:56.5px;width:10.0px"></i>
<i class="g bM" style="left:68.1px;width:26.6px"></i>
<i class="g bK" style="left:96.3px;width:9.0px"></i>
<i class="g bU" style="left:106.9px;width:20.3px"></i>
<i class="g bK" style="left:128.8px;width:9.0px"></i>
<i class="R" style="left:0.0px;letter-spacing:0.231px">&amp;&amp;sw05</i>
<i class="P" style="left:12.9px;letter-spacing:0.272px">&amp;&amp;nsr</i>
<i class="P" style="left:23.2px;letter-spacing:0.340px">&amp;&amp;am</i>
<i class="P" style="left:33.6px;letter-spacing:0.250px">&amp;&amp;rl=0</i>
<i class="P" style="left:44.9px;letter-spacing:0.254px">&amp;&amp;rr=0</i>
<i class="P" style="left:56.5px;letter-spacing:0.204px">&amp;&amp;lg=0</i>
<i class="M" style="left:68.1px;letter-spacing:0.101px">&amp;&amp;g0=&quot;Zueignung&quot;</i>
<i class="K" style="left:96.3px;letter-spacing:0.201px">&amp;&amp;c=0</i>
<i class="U" style="left:106.9px;letter-spacing:0.040px">{{ZUEIGNUNG}}</i>
<i class="K" style="left:128.8px;letter-spacing:0.201px">&amp;&amp;c=0</i>
</div>
<div class="l" style="top:56px;left:1.200px;width:238px">
<i class="g bR" style="left:0.0px;width:8.0px"></i>
<i class="g bR" style="left:9.5px;width:10.8px"></i>
<i class="R" style="left:0.0px;letter-spacing:0.156px">&amp;&amp;fz1</i>
<i class="R" style="left:9.5px;letter-spacing:0.088px">&amp;&amp;fzs=1</i>
</div>
<div class="l" style="top:60px;left:1.200px;width:238px">
<i class="g bP" style="left:0.0px;width:9.5px"></i>
<i class="g bP" style="left:11.1px;width:6.8px"></i>
<i class="g bP" style="left:19.5px;width:9.7px"></i>
<i class="P" style="left:0.0px;letter-spacing:0.221px">&amp;&amp;rl=0</i>
<i class="P" style="left:11.1px;letter-spacing:0.277px">&amp;&amp;al</i>
<i class="P" style="left:19.5px;letter-spacing:0.172px">&amp;&amp;lg=x</i>
<i class="D" style="left:30.7px;letter-spacing:0.225px">Ihr</i>
<i class="D" style="left:36.2px;letter-spacing:0.308px">naht</i>
<i class="D" style="left:44.4px;letter-spacing:0.199px">euch</i>
<i class="D" style="left:52.7px;letter-spacing:0.251px">wieder,</i>
<i class="D" style="left:64.7px;letter-spacing:0.208px">schwankende</i>
<i class="D" style="left:85.1px;letter-spacing:0.200px">Gestalten,</i>
</div>
<div class="l" style="top:64px;left:1.200px;letter-spacing:0.198px">Die  früh  sich  einst  dem  trüben  Blick  gezeigt.</div>
<div class="l" style="top:68px;left:1.200px;letter-spacing:0.209px">Versuch  ich  wohl,  euch  diesmal  festzuhalten?</div>
<div class="l" style="top:72px;left:1.200px;letter-spacing:0.228px">Fühl  ich  mein  Herz  noch  jenem  Wahn  geneigt?</div>
<div class="l" style="top:76px;left:1.200px;letter-spacing:0.183px">Ihr  drängt  euch  zu!  nun  gut,  so  mögt  ihr  walten,</div>
<div class="l" style="top:80px;left:1.200px;letter-spacing:0.206px">Wie  ihr  aus  Dunst  und  Nebel  um  mich  steigt;</div>
<div class="l" style="top:84px;left:1.200px;letter-spacing:0.262px">Mein  Busen  fühlt  sich  jugendlich  erschüttert</div>
<div class="l" style="top:88px;left:1.200px;letter-spacing:0.180px">Vom  Zauberhauch,  der  euren  Zug  umwittert.</div>
<div class="l" style="top:96px;left:1.200px;letter-spacing:0.213px">Ihr  bringt  mit  euch  die  Bilder  froher  Tage,</div>
<div class="l" style="top:100px;left:1.200px;letter-spacing:0.169px">Und  manche  liebe  Schatten  steigen  auf;</div>
<div class="l" style="top:104px;left:1.200px;letter-spacing:0.192px">Gleich  einer  alten,  halbverklungnen  Sage</div>
<div class="l" style="top:108px;left:1.200px;letter-spacing:0.178px">Kommt  erste  Lieb  und  Freundschaft  mit  herauf;</div>
<div class="l" style="top:112px;left:1.200px;letter-spacing:0.217px">Der  Schmerz  wird  neu,  es  wiederholt  die  Klage</div>
<div class="l" style="top:116px;left:1.200px;letter-spacing:0.153px">Des  Lebens  labyrinthisch  irren  Lauf,</div>
<div class="l" style="top:120px;left:1.200px;letter-spacing:0.295px">Und  nennt  die  Guten,  die,  um  schöne  Stunden</div>
<div class="l" style="top:124px;left:1.200px;letter-spacing:0.133px">Vom  Glück  getäuscht,  vor  mir  hinweggeschwunden.</div>
<div class="l" style="top:132px;left:1.200px;letter-spacing:0.224px">Sie  hören  nicht  die  folgenden  Gesänge,</div>
<div class="l" style="top:136px;left:1.200px;letter-spacing:0.239px">Die  Seelen,  denen  ich  die  ersten  sang;</div>
<div class="l" style="top:140px;left:1.200px;letter-spacing:0.171px">Zerstoben  ist  das  freundliche  Gedränge,</div>
<div class="l" style="top:144px;left:1.200px;letter-spacing:0.200px">Verklungen,  ach!  der  erste  Widerklang.</div>
<div class="l" style="top:148px;left:1.200px;letter-spacing:0.288px">Mein  Lied  ertönt  der  unbekannten  Menge,</div>
<div class="l" style="top:152px;left:1.200px;letter-spacing:0.171px">Ihr  Beifall  selbst  macht  meinem  Herzen  bang,</div>
<div class="l" style="top:156px;left:1.200px;letter-spacing:0.176px">Und  was  sich  sonst  an  meinem  Lied  erfreuet,</div>
<div class="l" style="top:160px;left:1.200px;letter-spacing:0.267px">Wenn  es  noch  lebt,  irrt  in  der  Welt  zerstreuet.</div>
<div class="l" style="top:168px;left:1.200px;letter-spacing:0.224px">Und  mich  ergreift  ein  längst  entwöhntes  Sehnen</div>
<div class="l" style="top:172px;left:1.200px;letter-spacing:0.204px">Nach  jenem  stillen,  ernsten  Geisterreich,</div>
<div class="l" style="top:176px;left:1.200px;letter-spacing:0.226px">Es  schwebet  nun  in  unbestimmten  Tönen</div>
<div class="l" style="top:180px;left:1.200px;letter-spacing:0.245px">Mein  lispelnd  Lied,  der  Äolsharfe  gleich,</div>
<div class="l" style="top:184px;left:1.200px;letter-spacing:0.118px">Ein  Schauer  faßt  mich,  Träne  folgt  den  Tränen,</div>
<div class="l" style="top:188px;left:1.200px;letter-spacing:0.167px">Das  strenge  Herz,  es  fühlt  sich  mild  und  weich;</div>
<div class="l" style="top:192px;left:1.200px;letter-spacing:0.196px">Was  ich  besitze,  seh  ich  wie  im  Weiten,</div>
<div class="l" style="top:196px;left:1.200px;letter-spacing:0.142px">Und  was  verschwand,  wird  mir  zu  Wirklichkeiten.</div>
<div class="l" style="top:200px;left:1.200px;width:238px">
<i class="g bR" style="left:0.0px;width:11.1px"></i>
<i class="g bP" style="left:12.6px;width:8.5px"></i>
<i class="g bP" style="left:22.8px;width:8.5px"></i>
<i class="g bP" style="left:32.9px;width:9.5px"></i>
<i class="g bP" style="left:43.9px;width:9.8px"></i>
<i class="g bP" style="left:55.3px;width:9.8px"></i>
<i class="g bM" style="left:66.7px;width:47.6px"></i>
<i class="g bK" style="left:115.8px;width:8.9px"></i>
<i class="g bU" style="left:126.3px;width:41.7px"></i>
<i class="g bK" style="left:169.6px;width:8.9px"></i>
<i class="R" style="left:0.0px;letter-spacing:0.193px">&amp;&amp;sw05</i>
<i class="P" style="left:12.6px;letter-spacing:0.236px">&amp;&amp;nsr</i>
<i class="P" style="left:22.8px;letter-spacing:0.295px">&amp;&amp;am</i>
<i class="P" style="left:32.9px;letter-spacing:0.217px">&amp;&amp;rl=0</i>
<i class="P" style="left:43.9px;letter-spacing:0.220px">&amp;&amp;rr=0</i>
<i class="P" style="left:55.3px;letter-spacing:0.170px">&amp;&amp;lg=0</i>
<i class="M" style="left:66.7px;letter-spacing:0.065px">&amp;&amp;g0=&quot;Vorspiel_auf_dem_Theater&quot;</i>
<i class="K" style="left:115.8px;letter-spacing:0.164px">&amp;&amp;c=0</i>
<i class="U" style="left:126.3px;letter-spacing:-0.041px">{{VORSPIEL AUF DEM THEATER}}</i>
<i class="K" style="left:169.6px;letter-spacing:0.164px">&amp;&amp;c=0</i>
</div>
<div class="l" style="top:208px;left:1.200px;width:238px">
<i class="g bP" style="left:0.0px;width:10.0px"></i>
<i class="g bK" style="left:11.6px;width:9.2px"></i>
<i class="g bK" style="left:84.5px;width:9.2px"></i>
<i class="P" style="left:0.0px;letter-spacing:0.225px">&amp;&amp;lg=x</i>
<i class="K" style="left:11.6px;letter-spacing:0.227px">&amp;&amp;c=0</i>
<i class="D" style="left:22.4px;letter-spacing:0.277px">Direktor.</i>
<i class="D" style="left:36.7px;letter-spacing:0.277px">Theaterdichter.</i>
<i class="D" style="left:60.6px;letter-spacing:0.180px">Lustige</i>
<i class="D" style="left:72.3px;letter-spacing:0.192px">Person.</i>
<i class="K" style="left:84.5px;letter-spacing:0.227px">&amp;&amp;c=0</i>
</div>
<div class="l" style="top:216px;left:1.200px;width:238px">
<i class="g bP" style="left:0.0px;width:9.6px"></i>
<i class="g bP" style="left:11.2px;width:6.9px"></i>
<i class="g bP" style="left:19.7px;width:9.8px"></i>
<i class="g bK" style="left:31.1px;width:9.0px"></i>
<i class="g bK" style="left:55.6px;width:9.0px"></i>
<i class="P" style="left:0.0px;letter-spacing:0.242px">&amp;&amp;rl=0</i>
<i class="P" style="left:11.2px;letter-spacing:0.300px">&amp;&amp;al</i>
<i class="P" style="left:19.7px;letter-spacing:0.193px">&amp;&amp;lg=x</i>
<i class="K" style="left:31.1px;letter-spacing:0.192px">&amp;&amp;c=0</i>
<i class="D" style="left:41.7px;letter-spacing:0.250px">Direktor.</i>
<i class="K" style="left:55.6px;letter-spacing:0.192px">&amp;&amp;c=0</i>
</div>
<div class="l" style="top:220px;left:1.200px;letter-spacing:0.271px">Ihr  beiden,  die  ihr  mir  so  oft,</div>
<div class="l" style="top:224px;left:1.200px;letter-spacing:0.183px">In  Not  und  Trübsal,  beigestanden,</div>
<div class="l" style="top:228px;left:1.200px;letter-spacing:0.165px">Sagt,  was  ihr  wohl  in  deutschen  Landen</div>
<div class="l" style="top:232px;left:1.200px;letter-spacing:0.270px">Von  unsrer  Unternehmung  hofft?</div>
<div class="l" style="top:236px;left:1.200px;letter-spacing:0.202px">Ich  wünschte  sehr  der  Menge  zu  behagen,</div>
<div class="l" style="top:240px;left:1.200px;letter-spacing:0.267px">Besonders  weil  sie  lebt  und  leben  läßt.</div>
<div class="l" style="top:244px;left:1.200px;letter-spacing:0.187px">Die  Pfosten  sind,  die  Bretter  aufgeschlagen,</div>
<div class="l" style="top:248px;left:1.200px;letter-spacing:0.181px">Und  jedermann  erwartet  sich  ein  Fest.</div>
<div class="l" style="top:252px;left:1.200px;letter-spacing:0.234px">Sie  sitzen  schon  mit  hohen  Augenbraunen</div>
<div class="l" style="top:256px;left:1.200px;letter-spacing:0.221px">Gelassen  da  und  möchten  gern  erstaunen.</div>
<div class="l" style="top:260px;left:1.200px;letter-spacing:0.194px">Ich  weiß,  wie  man  den  Geist  des  Volks  versöhnt;</div>
<div class="l" style="top:264px;left:1.200px;letter-spacing:0.203px">Doch  so  verlegen  bin  ich  nie  gewesen:</div>
<div class="l" style="top:268px;left:1.200px;letter-spacing:0.144px">Zwar  sind  sie  an  das  Beste  nicht  gewöhnt,</div>
<div class="l" style="top:272px;left:1.200px;letter-spacing:0.185px">Allein  sie  haben  schrecklich  viel  gelesen.</div>
<div class="l" style="top:276px;left:1.200px;letter-spacing:0.205px">Wie  machen  wir&#x27;s,  daß  alles  frisch  und  neu</div>
<div class="l" style="top:280px;left:1.200px;letter-spacing:0.194px">Und  mit  Bedeutung  auch  gefällig  sei?</div>
<div class="l" style="top:284px;left:1.200px;letter-spacing:0.212px">Denn  freilich  mag  ich  gern  die  Menge  sehen,</div>
<div class="l" style="top:288px;left:1.200px;letter-spacing:0.183px">Wenn  sich  der  Strom  nach  unsrer  Bude  drängt,</div>
<div class="l" style="top:292px;left:1.200px;letter-spacing:0.263px">Und  mit  gewaltig  wiederholten  Wehen</div>
<div class="l" style="top:296px;left:1.200px;letter-spacing:0.173px">Sich  durch  die  enge  Gnadenpforte  zwängt;</div>
<div class="l" style="top:300px;left:1.200px;letter-spacing:0.171px">Bei  hellem  Tage,  schon  vor  vieren,</div>
<div class="l" style="top:304px;left:1.200px;letter-spacing:0.195px">Mit  Stößen  sich  bis  an  die  Kasse  ficht</div>
<div class="l" style="top:308px;left:1.200px;letter-spacing:0.187px">Und,  wie  in  Hungersnot  um  Brot  an  Bäckertüren,</div>
<div class="l" style="top:312px;left:1.200px;letter-spacing:0.181px">Um  ein  Billet  sich  fast  die  Hälse  bricht.</div>
<div class="l" style="top:316px;left:1.200px;letter-spacing:0.213px">Dies  Wunder  wirkt  auf  so  verschiedne  Leute</div>
<div class="l" style="top:320px;left:1.200px;letter-spacing:0.270px">Der  Dichter  nur;  mein  Freund,  o  tu  es  heute!</div>
<div class="l" style="top:328px;left:1.200px;width:238px">
<i class="g bK" style="left:0.0px;width:9.1px"></i>
<i class="g bK" style="left:23.6px;width:9.1px"></i>
<i class="K" style="left:0.0px;letter-spacing:0.223px">&amp;&amp;c=0</i>
<i class="D" style="left:10.8px;letter-spacing:0.249px">Dichter.</i>
<i class="K" style="left:23.6px;letter-spacing:0.223px">&amp;&amp;c=0</i>
</div>
<div class="l" style="top:332px;left:1.200px;letter-spacing:0.236px">O  sprich  mir  nicht  von  jener  bunten  Menge,</div>
<div class="l" style="top:336px;left:1.200px;letter-spacing:0.268px">Bei  deren  Anblick  uns  der  Geist  entflieht.</div>
<div class="l" style="top:340px;left:1.200px;letter-spacing:0.182px">Verhülle  mir  das  wogende  Gedränge,</div>
<div class="l" style="top:344px;left:1.200px;letter-spacing:0.194px">Das  wider  Willen  uns  zum  Strudel  zieht.</div>
<div class="l" style="top:348px;left:1.200px;letter-spacing:0.187px">Nein,  führe  mich  zur  stillen  Himmelsenge,</div>
<div class="l" style="top:352px;left:1.200px;letter-spacing:0.268px">Wo  nur  dem  Dichter  reine  Freude  blüht;</div>
<div class="l" style="top:356px;left:1.200px;letter-spacing:0.182px">Wo  Lieb  und  Freundschaft  unsres  Herzens  Segen</div>
<div class="l" style="top:360px;left:1.200px;letter-spacing:0.240px">Mit  Götterhand  erschaffen  und  erpflegen.</div>
<div class="l" style="top:368px;left:1.200px;letter-spacing:0.182px">Ach!  was  in  tiefer  Brust  uns  da  entsprungen,</div>
<div class="l" style="top:372px;left:1.200px;letter-spacing:0.158px">Was  sich  die  Lippe  schüchtern  vorgelallt,</div>
<div class="l" style="top:376px;left:1.200px;letter-spacing:0.235px">Mißraten  jetzt  und  jetzt  vielleicht  gelungen,</div>
<div class="l" style="top:380px;left:1.200px;letter-spacing:0.173px">Verschlingt  des  wilden  Augenblicks  Gewalt.</div>
<div class="l" style="top:384px;left:1.200px;letter-spacing:0.190px">Oft,  wenn  es  erst  durch  Jahre  durchgedrungen,</div>
<div class="l" style="top:388px;left:1.200px;letter-spacing:0.178px">Erscheint  es  in  vollendeter  Gestalt.</div>
<div class="l" style="top:392px;left:1.200px;letter-spacing:0.170px">Was  glänzt,  ist  für  den  Augenblick  geboren,</div>
<div class="l" style="top:396px;left:1.200px;letter-spacing:0.186px">Das  Echte  bleibt  der  Nachwelt  unverloren.</div>
<div class="l" style="top:404px;left:1.200px;width:238px">
<i class="g bK" style="left:0.0px;width:9.1px"></i>
<i class="g bK" style="left:34.5px;width:9.1px"></i>
<i class="K" style="left:0.0px;letter-spacing:0.212px">&amp;&amp;c=0</i>
<i class="D" style="left:10.7px;letter-spacing:0.169px">Lustige</i>
<i class="D" style="left:22.3px;letter-spacing:0.181px">Person.</i>
<i class="K" style="left:34.5px;letter-spacing:0.212px">&amp;&amp;c=0</i>
</div>
<div class="l" style="top:408px;left:1.200px;letter-spacing:0.225px">Wenn  ich  nur  nichts  von  Nachwelt  hören  sollte.</div>
<div class="l" style="top:412px;left:1.200px;letter-spacing:0.191px">Gesetzt,  daß  ich  von  Nachwelt  reden  wollte,</div>
<div class="l" style="top:416px;left:1.200px;letter-spacing:0.234px">Wer  machte  denn  der  Mitwelt  Spaß?</div>
<div class="l" style="top:420px;left:1.200px;letter-spacing:0.270px">Den  will  sie  doch  und  soll  ihn  haben.</div>
<div class="l" style="top:424px;left:1.200px;letter-spacing:0.207px">Die  Gegenwart  von  einem  braven  Knaben</div>
<div class="l" style="top:428px;left:1.200px;letter-spacing:0.194px">Ist,  dünkt  mich,  immer  auch  schon  was.</div>
<div class="l" style="top:432px;left:1.200px;letter-spacing:0.202px">Wer  sich  behaglich  mitzuteilen  weiß,</div>
<div class="l" style="top:436px;left:1.200px;letter-spacing:0.219px">Den  wird  des  Volkes  Laune  nicht  erbittern;</div>
<div class="l" style="top:440px;left:1.200px;letter-spacing:0.188px">Er  wünscht  sich  einen  großen  Kreis,</div>
<div class="l" style="top:444px;left:1.200px;letter-spacing:0.140px">Um  ihn  gewisser  zu  erschüttern.</div>
<div class="l" style="top:448px;left:1.200px;letter-spacing:0.174px">Drum  seid  nur  brav  und  zeigt  euch  musterhaft,</div>
<div class="l" style="top:452px;left:1.200px;letter-spacing:0.180px">Laßt  Phantasie,  mit  allen  ihren  Chören,</div>
<div class="l" style="top:456px;left:1.200px;letter-spacing:0.179px">Vernunft,  Verstand,  Empfindung,  Leidenschaft,</div>
<div class="l" style="top:460px;left:1.200px;letter-spacing:0.232px">Doch,  merkt  euch  wohl!  nicht  ohne  Narrheit  hören.</div>
<div class="l" style="top:468px;left:1.200px;width:238px">
<i class="g bK" style="left:0.0px;width:9.0px"></i>
<i class="g bK" style="left:24.6px;width:9.0px"></i>
<i class="K" style="left:0.0px;letter-spacing:0.200px">&amp;&amp;c=0</i>
<i class="D" style="left:10.6px;letter-spacing:0.257px">Direktor.</i>
<i class="K" style="left:24.6px;letter-spacing:0.200px">&amp;&amp;c=0</i>
</div>
<div class="l" style="top:472px;left:1.200px;letter-spacing:0.186px">Besonders  aber  laßt  genug  geschehn!</div>
<div class="l" style="top:476px;left:1.200px;letter-spacing:0.150px">Man  kommt  zu  schaun,  man  will  am  liebsten  sehn.</div>
<div class="l" style="top:480px;left:1.200px;letter-spacing:0.227px">Wird  vieles  vor  den  Augen  abgesponnen,</div>
<div class="l" style="top:484px;left:1.200px;letter-spacing:0.177px">So  daß  die  Menge  staunend  gaffen  kann,</div>
<div class="l" style="top:488px;left:1.200px;letter-spacing:0.222px">Da  habt  Ihr  in  der  Breite  gleich  gewonnen,</div>
<div class="l" style="top:492px;left:1.200px;letter-spacing:0.254px">Ihr  seid  ein  vielgeliebter  Mann.</div>
<div class="l" style="top:496px;left:1.200px;letter-spacing:0.181px">Die  Masse  könnt  Ihr  nur  durch  Masse  zwingen,</div>
<div class="l" style="top:500px;left:1.200px;letter-spacing:0.158px">Ein  jeder  sucht  sich  endlich  selbst  was  aus.</div>
<div class="l" style="top:504px;left:1.200px;letter-spacing:0.170px">Wer  vieles  bringt,  wird  manchem  etwas  bringen;</div>
<div class="l" style="top:508px;left:1.200px;letter-spacing:0.208px">Und  jeder  geht  zufrieden  aus  dem  Haus.</div>
<div class="l" style="top:512px;left:1.200px;letter-spacing:0.182px">Gebt  Ihr  ein  Stück,  so  gebt  es  gleich  in  Stücken!</div>
<div class="l" style="top:516px;left:1.200px;letter-spacing:0.119px">Solch  ein  Ragout,  es  muß  Euch  glücken;</div>
<div class="l" style="top:520px;left:1.200px;letter-spacing:0.112px">Leicht  ist  es  vorgelegt,  so  leicht  als  ausgedacht.</div>
<div class="l" style="top:524px;left:1.200px;letter-spacing:0.175px">Was  hilft&#x27;s,  wenn  Ihr  ein  Ganzes  dargebracht?</div>
<div class="l" style="top:528px;left:1.200px;letter-spacing:0.148px">Das  Publikum  wird  es  Euch  doch  zerpflücken.</div>
<div class="l" style="top:536px;left:1.200px;width:238px">
<i class="g bK" style="left:0.0px;width:9.1px"></i>
<i class="g bK" style="left:23.6px;width:9.1px"></i>
<i class="K" style="left:0.0px;letter-spacing:0.223px">&amp;&amp;c=0</i>
<i class="D" style="left:10.8px;letter-spacing:0.249px">Dichter.</i>
<i class="K" style="left:23.6px;letter-spacing:0.223px">&amp;&amp;c=0</i>
</div>
<div class="l" style="top:540px;left:1.200px;letter-spacing:0.225px">Ihr  fühlet  nicht,  wie  schlecht  ein  solches  Handwerk  sei!</div>
<div class="l" style="top:544px;left:1.200px;letter-spacing:0.223px">Wie  wenig  das  dem  echten  Künstler  zieme!</div>
<div class="l" style="top:548px;left:1.200px;letter-spacing:0.226px">Der  saubern  Herren  Pfuscherei</div>
<div class="l" style="top:552px;left:1.200px;letter-spacing:0.128px">Ist,  merk  ich,  schon  bei  Euch  Maxime.</div>
<div class="l" style="top:560px;left:1.200px;width:238px">
<i class="g bK" style="left:0.0px;width:9.0px"></i>
<i class="g bK" style="left:24.6px;width:9.0px"></i>
<i class="K" style="left:0.0px;letter-spacing:0.200px">&amp;&amp;c=0</i>
<i class="D" style="left:10.6px;letter-spacing:0.257px">Direktor.</i>
<i class="K" style="left:24.6px;letter-spacing:0.200px">&amp;&amp;c=0</i>
</div>
<div class="l" style="top:564px;left:1.200px;letter-spacing:0.137px">Ein  solcher  Vorwurf  läßt  mich  ungekränkt:</div>
<div class="l" style="top:568px;left:1.200px;letter-spacing:0.206px">Ein  Mann,  der  recht  zu  wirken  denkt,</div>
<div class="l" style="top:572px;left:1.200px;letter-spacing:0.171px">Muß  auf  das  beste  Werkzeug  halten.</div>
<div class="l" style="top:576px;left:1.200px;letter-spacing:0.194px">Bedenkt,  Ihr  habet  weiches  Holz  zu  spalten,</div>
<div class="l" style="top:580px;left:1.200px;letter-spacing:0.271px">Und  seht  nur  hin,  für  wen  Ihr  schreibt!</div>
</div>
<div style="left:2px;top:27px;width:242px;height:92px;background:rgba(255,128,0,.2)"></div>
</div>
<div id="status" style="left:1px;top:706px;width:1279px;height:29px;background:#f0f0f0">
<span class="t" style="left:2.3px;top:8px;letter-spacing:0.01px">User Defined language file - Stenotext</span>
<span class="t" style="left:361.7px;top:8px;letter-spacing:-0.27px">length : 212.531</span>
<span class="t" style="left:482.0px;top:8px;letter-spacing:-0.41px">lines : 6.999</span>
<span class="t" style="left:612.4px;top:8px;letter-spacing:-0.64px">Ln : 26</span>
<span class="t" style="left:669.7px;top:8px;letter-spacing:-0.35px">Col : 39</span>
<span class="t" style="left:734.9px;top:8px;letter-spacing:-0.40px">Sel : 0 | 0</span>
<span class="t" style="left:937.2px;top:8px;letter-spacing:-0.56px">Windows (CR LF)</span>
<span class="t" style="left:1075.2px;top:8px;letter-spacing:-0.58px">ANSI</span>
<span class="t" style="left:1225.1px;top:8px;letter-spacing:-1.01px">INS</span>
<div style="left:357px;top:2px;width:1px;height:26px;background:#d2d2d2"></div>
<div style="left:607px;top:2px;width:1px;height:26px;background:#d2d2d2"></div>
<div style="left:932px;top:2px;width:1px;height:26px;background:#d2d2d2"></div>
<div style="left:1070px;top:2px;width:1px;height:26px;background:#d2d2d2"></div>
<div style="left:1220px;top:2px;width:1px;height:26px;background:#d2d2d2"></div>
<div style="left:1258px;top:2px;width:1px;height:26px;background:#d2d2d2"></div>
<svg style="left:1266px;top:16px" width="12" height="12" viewBox="0 0 12 12"><rect x="8" y="0" width="3" height="3" fill="#bababa"/><rect x="4" y="4" width="3" height="3" fill="#bababa"/><rect x="8" y="4" width="3" height="3" fill="#bababa"/><rect x="0" y="8" width="3" height="3" fill="#bababa"/><rect x="4" y="8" width="3" height="3" fill="#bababa"/><rect x="8" y="8" width="3" height="3" fill="#bababa"/></svg>
<div style="left:0;top:0;width:1279px;height:1px;background:#dcdcdc"></div>
</div>
</body></html>
